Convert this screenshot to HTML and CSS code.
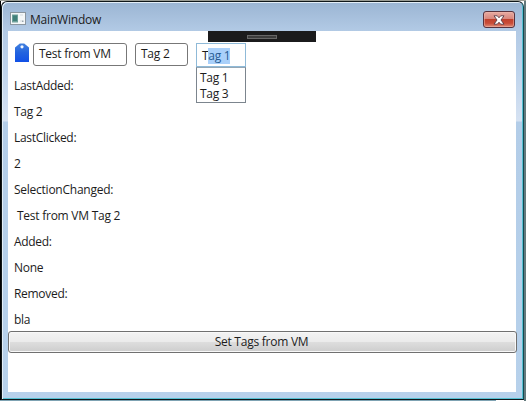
FILE: index.html
```html
<!DOCTYPE html>
<html lang="en">
<head>
<meta charset="utf-8">
<title>MainWindow</title>
<link rel="stylesheet" href="styles.css">
</head>
<body>
<div class="desktop">
  <div class="window">
    <header class="titlebar">
      <svg class="app-icon" width="16" height="13" viewBox="0 0 16 13">
        <rect x=".5" y=".5" width="15" height="12" fill="#f4f7f8" stroke="#8a959e"/>
        <rect x="2" y="2.500" width="6" height="8" fill="#6fa09a"/>
        <rect x="3" y="3.500" width="4" height="5.500" fill="#41807a"/>
        <path d="M10 3h3M10 9h2" stroke="#d5dbdf"/>
        <rect x="12" y="8.500" width="1.500" height="1.500" fill="#9aa6ad"/>
      </svg>
      <h1 class="title">MainWindow</h1>
      <button class="close" aria-label="Close">
        <svg width="12" height="10" viewBox="0 0 12 10">
          <path d="M1 .8h3.300L6 2.800 7.700.8H11L8 5l3 4.200H7.700L6 7.200 4.300 9.200H1L4 5z" fill="#fff" stroke="#5a3c46" stroke-width=".9"/>
        </svg>
      </button>
    </header>
    <main class="client">
      <div class="debug-bar"><span class="grip"></span></div>
      <div class="tags">
        <svg class="tag-icon" width="14" height="19" viewBox="0 0 14 19">
          <defs>
            <linearGradient id="blue" x1="0" y1="0" x2="0" y2="1">
              <stop offset="0" stop-color="#4382de"/>
              <stop offset=".5" stop-color="#2263df"/>
              <stop offset="1" stop-color="#1150e6"/>
            </linearGradient>
          </defs>
          <path d="M0 19V4.500L4.800.4h4.400L14 4.500V19z" fill="url(#blue)"/>
          <circle cx="7" cy="3.800" r="1.600" fill="#f3f8ff"/>
        </svg>
        <div class="tag tag-first">Test from VM</div>
        <div class="tag tag-second">Tag 2</div>
        <div class="combo">
          <div class="input"><span>T</span><span class="selected">ag 1</span></div>
          <ul class="menu">
            <li>Tag 1</li>
            <li>Tag 3</li>
          </ul>
        </div>
      </div>
      <div class="log">
        <p>LastAdded:</p>
        <p>Tag 2</p>
        <p>LastClicked:</p>
        <p>2</p>
        <p class="wide">SelectionChanged:</p>
        <p class="wide indent">Test from VM Tag 2</p>
        <p>Added:</p>
        <p>None</p>
        <p>Removed:</p>
        <p>bla</p>
      </div>
      <button class="set-tags">Set Tags from VM</button>
    </main>
  </div>
</div>
</body>
</html>
```
FILE: styles.css
```css
* { box-sizing: border-box; }

body {
  margin: 0;
  width: 526px;
  height: 401px;
  overflow: hidden;
  font: 12px/16px "Open Sans", "Noto Sans", sans-serif;
  letter-spacing: -0.3px;
  color: #1c1c1c;
  white-space: nowrap;
}

.desktop {
  width: 526px;
  height: 401px;
  padding: 1px 2px 1px 1px;
  background: linear-gradient(#9a9c94, #9a9c94) 0 0 / 100% 1px no-repeat,
    linear-gradient(#7fa3b3, #7fa3b3) 0 100% / 496px 1px no-repeat,
    linear-gradient(90deg, #000 0 1px, #fff 1px 524px, #63797c 524px);
}

.window {
  height: 399px;
  padding: 0 7px 6px 6px;
  border: 1px solid #10171a;
  border-right-color: #134a54;
  border-radius: 6px 6px 0 0;
  background: linear-gradient(#9bb5d3 0, #b2cae5 29px, #bfd4ec 70px, #d6e2f2 119px, #b3cde8 120px, #b7d1eb 100%);
  box-shadow: inset 1px 1px 0 #e3eef7, inset -1px -1px 0 #55c0d2;
}

.titlebar {
  display: flex;
  align-items: center;
  height: 29px;
  padding: 4px 1px 0 2px;
}

.title {
  margin: 2px auto 0 4px;
  font-size: 12px;
  font-weight: 400;
  line-height: 16px;
  letter-spacing: -0.2px;
}

.app-icon { margin-top: -1px; }

.close {
  display: grid;
  place-items: center;
  width: 32px;
  height: 17px;
  margin-top: 2px;
  padding: 0;
  border: 1px solid #57323d;
  border-radius: 3px;
  background: linear-gradient(#e7aba2 0, #d8877d 45%, #c0422e 50%, #c94d38 75%, #df8c78 100%);
  box-shadow: inset 0 0 0 1px #f0b9ae80;
}

.client {
  position: relative;
  height: 361px;
  background: #fff;
}

.debug-bar {
  position: absolute;
  top: 0;
  left: 200px;
  display: grid;
  place-items: center;
  width: 108px;
  height: 11px;
  background: #1b1b1c;
}

.grip {
  width: 30px;
  height: 4px;
  border: 1px solid #666;
  background: #3c3c3c;
}

.tags {
  display: flex;
  align-items: flex-start;
  height: 42px;
  padding: 12px 0 0 7px;
}

.tag {
  height: 23px;
  padding: 2px 5px;
  border: 1px solid #777;
  border-radius: 3px;
  background: #fff;
  letter-spacing: -0.25px;
}

.tag-first { width: 94px; margin-left: 4px; }
.tag-second { width: 53px; margin: 0 8px; }

.combo {
  position: relative;
  width: 50px;
}

.input {
  height: 24px;
  padding: 4px 5px;
  border: 1px solid #8fbad8;
}

.selected {
  display: inline-block;
  height: 16px;
  color: #275b93;
  background: #a9d0fa;
}

.menu {
  position: absolute;
  top: 24px;
  left: 0;
  width: 50px;
  height: 36px;
  margin: 0;
  padding: 2px 3px;
  border: 1px solid #7c858e;
  border-top-color: #94a7b6;
  background: #fff;
  list-style: none;
}

.log {
  height: 258px;
}

.log p {
  height: 26px;
  margin: 0;
  padding: 5px 6px;
}

.log .wide { letter-spacing: -0.25px; }

.log .indent { padding-left: 9px; }

.set-tags {
  display: block;
  width: 509px;
  height: 22px;
  padding: 0 2px 0 0;
  border: 1px solid #707070;
  border-radius: 3px;
  background: linear-gradient(#f3f3f3 0, #ebebeb 48%, #dddddd 52%, #cdcdcd 100%);
  box-shadow: inset 0 0 0 1px #f8f8f8;
  color: #1c1c1c;
  font: inherit;
  letter-spacing: -0.25px;
}
```
